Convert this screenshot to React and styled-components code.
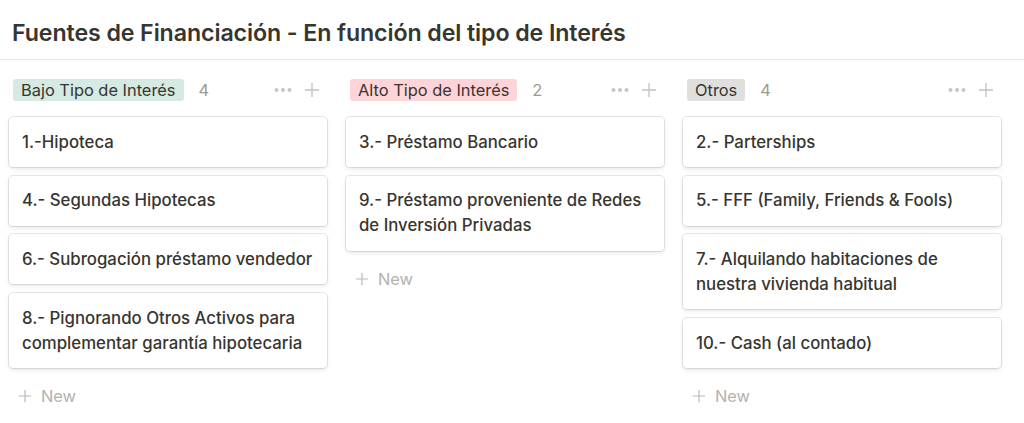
import React from "react";
import styled, { createGlobalStyle } from "styled-components";

const Global = createGlobalStyle`
  html, body { margin: 0; padding: 0; background: #fff; }
  body { font-family: Inter, "Noto Sans", "Liberation Sans", sans-serif; color: #37352f; }
  * { box-sizing: border-box; }
`;

const Page = styled.div`
  width: 1024px;
  height: 423px;
  overflow: hidden;
  background: #fff;
`;

const Title = styled.h1`
  margin: 0;
  padding: 19px 0 0 12px;
  height: 60px;
  font-size: 23.2px;
  font-weight: 600;
  letter-spacing: -0.1px;
  color: #37352f;
  border-bottom: 1px solid #e6e6e4;
`;

const Board = styled.div`
  display: flex;
  gap: 19px;
  padding: 18px 0 0 9px;
`;

const Column = styled.div`
  width: 318px;
  flex: 0 0 318px;
  display: flex;
  flex-direction: column;
`;

const Header = styled.div`
  display: flex;
  align-items: center;
  height: 24px;
  padding: 0 7px 0 4px;
  margin-bottom: 15px;
`;

const Tag = styled.span`
  display: inline-flex;
  align-items: center;
  height: 22px;
  padding: 0 8px;
  border-radius: 3px;
  background: ${(p) => p.$bg};
  font-size: 16.4px;
  color: #37352f;
  white-space: nowrap;
`;

const Count = styled.span`
  margin-left: 15px;
  font-size: 16.4px;
  color: #9b9a97;
`;

const Spacer = styled.div`
  flex: 1;
`;

const IconBtn = styled.span`
  display: inline-flex;
  align-items: center;
  justify-content: center;
  margin-left: ${(p) => p.$ml || 0}px;
`;

const Cards = styled.div`
  display: flex;
  flex-direction: column;
  gap: 8.7px;
`;

const Card = styled.div`
  background: #fff;
  border-radius: 4px;
  box-shadow: rgba(15, 15, 15, 0.1) 0 0 0 1px, rgba(15, 15, 15, 0.1) 0 2px 4px;
  padding: 12.5px 13px;
  font-size: 16.8px;
  font-weight: 500;
  line-height: 25px;
  color: #37352f;
`;

const NewRow = styled.div`
  display: flex;
  align-items: center;
  gap: 9px;
  height: 26px;
  margin-top: 15px;
  padding-left: 9px;
  font-size: 16.4px;
  color: #b3b2af;
`;

const Dots = () => (
  <svg width="18" height="6" viewBox="0 0 18 6">
    <circle cx="2.5" cy="3" r="2" fill="#c7c6c4" />
    <circle cx="9" cy="3" r="2" fill="#c7c6c4" />
    <circle cx="15.5" cy="3" r="2" fill="#c7c6c4" />
  </svg>
);

const Plus = ({ size = 16, color = "#c2c1be" }) => (
  <svg width={size} height={size} viewBox="0 0 16 16">
    <path d="M8 1v14M1 8h14" stroke={color} strokeWidth="1.3" fill="none" />
  </svg>
);

const columns = [
  {
    name: "Bajo Tipo de Interés",
    bg: "#d5eae2",
    items: [
      "1.-Hipoteca",
      "4.- Segundas Hipotecas",
      "6.- Subrogación préstamo vendedor",
      "8.- Pignorando Otros Activos para complementar garantía hipotecaria",
    ],
  },
  {
    name: "Alto Tipo de Interés",
    bg: "#ffd4d9",
    items: ["3.- Préstamo Bancario", "9.- Préstamo proveniente de Redes de Inversión Privadas"],
  },
  {
    name: "Otros",
    bg: "#dfdfdd",
    items: [
      "2.- Parterships",
      "5.- FFF (Family, Friends & Fools)",
      "7.- Alquilando habitaciones de nuestra vivienda habitual",
      "10.- Cash (al contado)",
    ],
  },
];

export default function App() {
  return (
    <Page>
      <Global />
      <Title>Fuentes de Financiación - En función del tipo de Interés</Title>
      <Board>
        {columns.map((c) => (
          <Column key={c.name}>
            <Header>
              <Tag $bg={c.bg}>{c.name}</Tag>
              <Count>{c.items.length}</Count>
              <Spacer />
              <IconBtn>
                <Dots />
              </IconBtn>
              <IconBtn $ml={12}>
                <Plus />
              </IconBtn>
            </Header>
            <Cards>
              {c.items.map((t) => (
                <Card key={t}>{t}</Card>
              ))}
            </Cards>
            <NewRow>
              <Plus size={14} color="#b8b7b4" />
              New
            </NewRow>
          </Column>
        ))}
      </Board>
    </Page>
  );
}
